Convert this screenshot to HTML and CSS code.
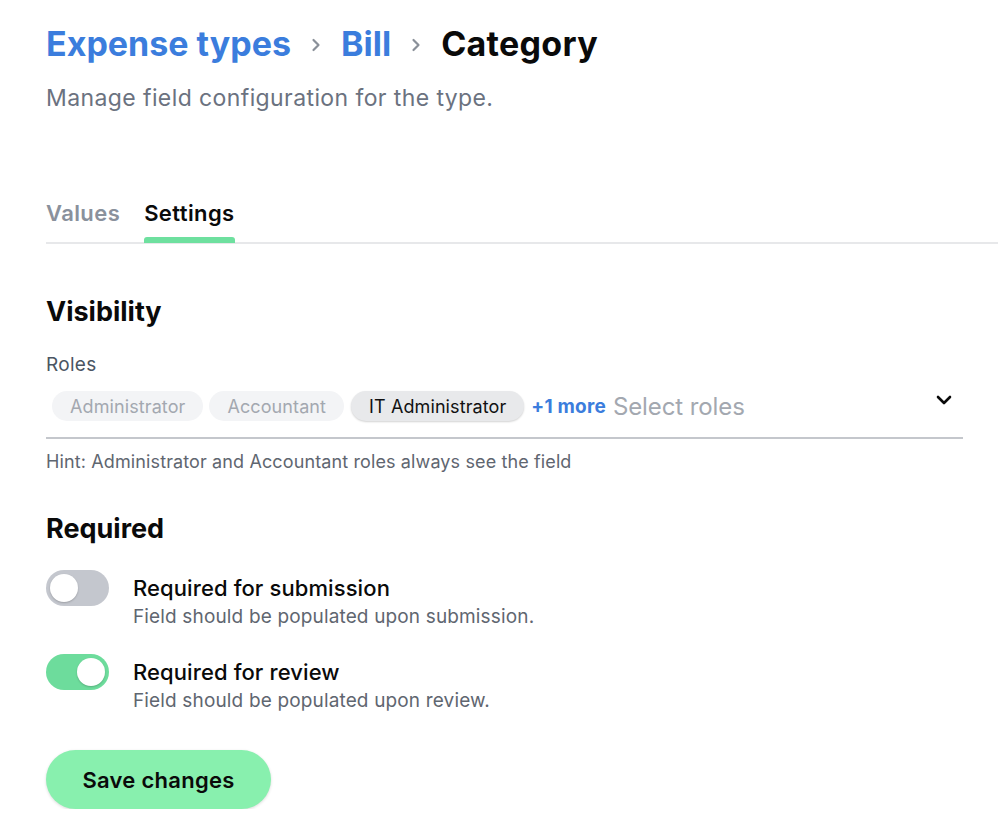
FILE: index.html
```html
<!DOCTYPE html>
<html lang="en">
<head>
<meta charset="utf-8">
<title>Category settings</title>
<link rel="stylesheet" href="styles.css">
</head>
<body>
<div class="page">
  <header class="header">
    <h1 class="crumbs">
      <a class="crumb-link" href="#">Expense types</a>
      <svg class="crumb-sep" viewBox="0 0 12 16" width="12" height="16" aria-hidden="true"><path d="M3.5 3 L8.5 8 L3.5 13" fill="none" stroke="currentColor" stroke-width="2.2" stroke-linecap="round" stroke-linejoin="round"/></svg>
      <a class="crumb-link" href="#">Bill</a>
      <svg class="crumb-sep" viewBox="0 0 12 16" width="12" height="16" aria-hidden="true"><path d="M3.5 3 L8.5 8 L3.5 13" fill="none" stroke="currentColor" stroke-width="2.2" stroke-linecap="round" stroke-linejoin="round"/></svg>
      <span class="crumb-current">Category</span>
    </h1>
    <p class="subtitle">Manage field configuration for the type.</p>
  </header>

  <nav class="tabs">
    <a class="tab" href="#">Values</a>
    <a class="tab tab-active" href="#">Settings</a>
  </nav>

  <section class="section">
    <h2 class="section-title">Visibility</h2>
    <div class="field">
      <div class="field-label">Roles</div>
      <div class="select">
        <div class="chips">
          <span class="chip chip-locked">Administrator</span>
          <span class="chip chip-locked">Accountant</span>
          <span class="chip chip-selected">IT Administrator</span>
          <span class="more">+1 more</span>
          <span class="placeholder">Select roles</span>
        </div>
        <svg class="chevron" viewBox="0 0 16 10" width="16" height="10" aria-hidden="true"><path d="M2 2 L8 8 L14 2" fill="none" stroke="currentColor" stroke-width="2.6" stroke-linecap="round" stroke-linejoin="round"/></svg>
      </div>
      <div class="hint">Hint: Administrator and Accountant roles always see the field</div>
    </div>
  </section>

  <section class="section section-required">
    <h2 class="section-title">Required</h2>
    <div class="toggle-list">
      <div class="toggle-row">
        <span class="switch"><span class="knob"></span></span>
        <div class="toggle-text">
          <div class="toggle-title">Required for submission</div>
          <div class="toggle-desc">Field should be populated upon submission.</div>
        </div>
      </div>
      <div class="toggle-row">
        <span class="switch switch-on"><span class="knob"></span></span>
        <div class="toggle-text">
          <div class="toggle-title">Required for review</div>
          <div class="toggle-desc">Field should be populated upon review.</div>
        </div>
      </div>
    </div>
  </section>

  <button class="save-btn" type="button">Save changes</button>
</div>
</body>
</html>
```

FILE: styles.css
```css
* { box-sizing: border-box; }

html, body {
  margin: 0;
  padding: 0;
  background: #ffffff;
}

body {
  font-family: Inter, "Noto Sans", "Liberation Sans", sans-serif;
  color: #111111;
  overflow: hidden;
}

.page {
  padding: 24px 0 0 46px;
}

.header {
  display: flex;
  flex-direction: column;
}

.crumbs {
  margin: 0;
  display: flex;
  align-items: center;
  gap: 19px;
  font-size: 34px;
  line-height: 40px;
  font-weight: 700;
  letter-spacing: 0;
}

.crumb-link {
  color: #3b7ddd;
  text-decoration: none;
}

.crumb-current {
  color: #0a0a0a;
  letter-spacing: 0.3px;
}

.crumb-sep {
  color: #8a9099;
  margin-top: 2px;
}

.subtitle {
  margin: 20px 0 0 0;
  font-size: 23px;
  line-height: 28px;
  letter-spacing: 0.4px;
  color: #6b7280;
}

.tabs {
  margin-top: 87px;
  display: flex;
  gap: 24px;
  border-bottom: 2px solid #e7e8ea;
}

.tab {
  position: relative;
  font-size: 22px;
  line-height: 28px;
  font-weight: 600;
  letter-spacing: 0.4px;
  color: #8a919c;
  text-decoration: none;
  padding-bottom: 15px;
}

.tab-active {
  color: #0a0a0a;
}

.tab-active::after {
  content: "";
  position: absolute;
  left: 0;
  right: 0;
  bottom: -1px;
  height: 6px;
  border-radius: 3px 3px 0 0;
  background: #6ee09f;
}

.section {
  margin-right: 35px;
}

.section-title {
  margin: 51px 0 0 0;
  font-size: 27px;
  line-height: 34px;
  font-weight: 700;
  color: #0a0a0a;
}

.field {
  margin-top: 24px;
}

.field-label {
  font-size: 19px;
  line-height: 24px;
  letter-spacing: 0.3px;
  color: #4b5563;
}

.select {
  margin-top: 10px;
  display: flex;
  align-items: center;
  justify-content: space-between;
  padding: 4px 11px 16px 6px;
  border-bottom: 2px solid #c4c7cc;
}

.chips {
  display: flex;
  align-items: center;
  gap: 6px;
}

.chip {
  height: 30px;
  padding: 0 18px;
  border-radius: 15px;
  display: inline-flex;
  align-items: center;
  font-size: 18px;
  letter-spacing: 0.1px;
}

.chip-locked {
  background: #f3f4f6;
  color: #a3a8b0;
}

.chip-selected {
  margin-left: 1px;
  background: #e8e9eb;
  color: #111111;
  box-shadow: 0 1px 2px rgba(0, 0, 0, 0.18);
}

.more {
  margin-left: 1px;
  font-size: 19px;
  font-weight: 700;
  letter-spacing: 0.2px;
  color: #3b7ddd;
}

.placeholder {
  margin-left: 1px;
  font-size: 24px;
  letter-spacing: -0.1px;
  color: #a3a8b0;
}

.chevron {
  color: #0a0a0a;
  margin-top: -12px;
}

.hint {
  margin-top: 11px;
  font-size: 18px;
  line-height: 24px;
  letter-spacing: 0.12px;
  color: #5f6670;
}

.section-required .section-title {
  margin-top: 38px;
}

.toggle-list {
  margin-top: 24px;
  display: flex;
  flex-direction: column;
  gap: 24px;
}

.toggle-row {
  display: flex;
  align-items: flex-start;
  gap: 24px;
}

.switch {
  flex: none;
  width: 63px;
  height: 36px;
  border-radius: 18px;
  background: #c4c7ce;
  display: flex;
  align-items: center;
  padding: 0 4px;
}

.switch-on {
  background: #6ddc9c;
  justify-content: flex-end;
}

.knob {
  width: 28px;
  height: 28px;
  border-radius: 50%;
  background: #ffffff;
  box-shadow: 0 1px 2px rgba(0, 0, 0, 0.2);
}

.toggle-text {
  display: flex;
  flex-direction: column;
  padding-top: 4px;
}

.toggle-title {
  font-size: 22px;
  line-height: 28px;
  font-weight: 500;
  letter-spacing: 0.1px;
  color: #0a0a0a;
}

.toggle-desc {
  margin-top: 2px;
  font-size: 19px;
  line-height: 26px;
  letter-spacing: 0.15px;
  color: #5f6670;
}

.save-btn {
  margin-top: 36px;
  width: 225px;
  height: 59px;
  border: none;
  border-radius: 30px;
  background: #88f0ae;
  box-shadow: 0 1px 3px rgba(0, 0, 0, 0.15);
  font-family: inherit;
  font-size: 22px;
  font-weight: 600;
  letter-spacing: 0.28px;
  color: #0a0a0a;
  cursor: pointer;
}
```
